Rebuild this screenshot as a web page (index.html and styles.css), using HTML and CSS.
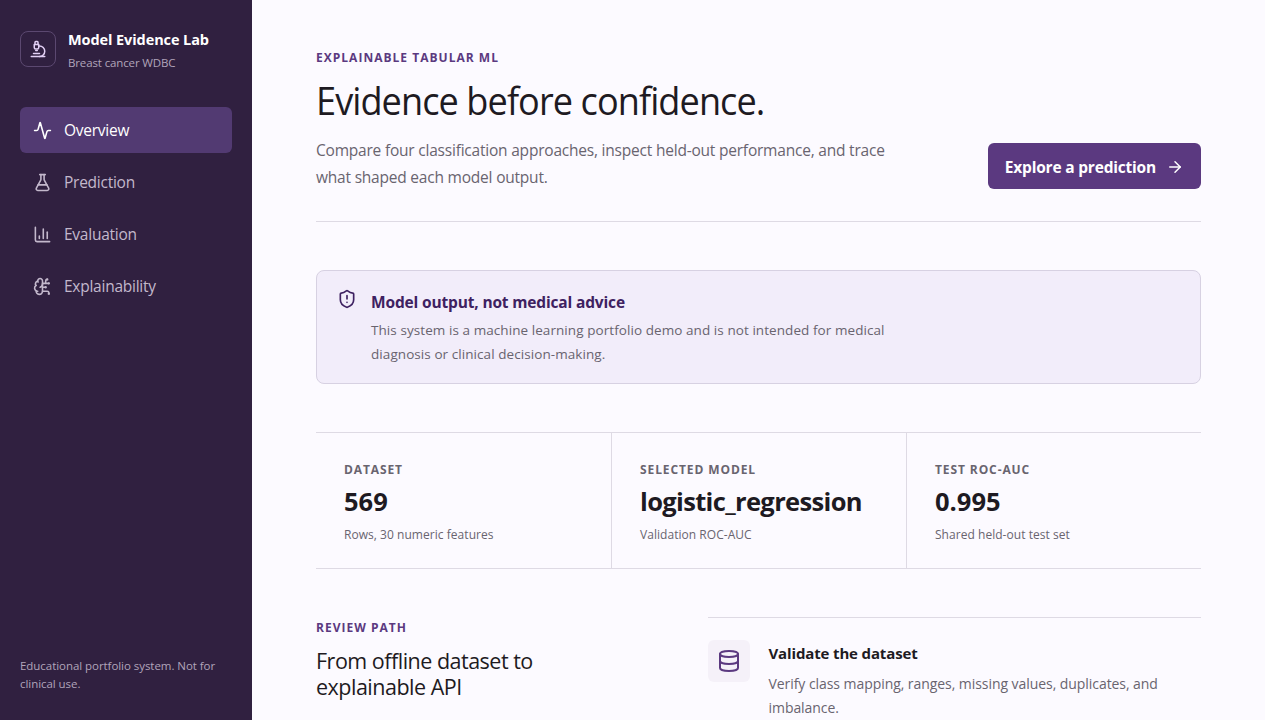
FILE: index.html
```html
<!DOCTYPE html>
<html lang="en">
<head>
    <meta charset="UTF-8">
    <meta name="viewport" content="width=device-width, initial-scale=1.0">
    <title>Model Evidence Lab</title>
    <link rel="stylesheet" href="styles.css">
</head>
<body>
    <div class="app">
        <aside class="sidebar">
            <div class="brand">
                <span class="brand-mark">
                    <svg class="icon" viewBox="0 0 24 24"><path d="M6 18h8"/><path d="M3 22h18"/><path d="M14 22a7 7 0 1 0 0-14h-1"/><path d="M9 14h2"/><path d="M9 12a2 2 0 0 1-2-2V6h6v4a2 2 0 0 1-2 2Z"/><path d="M12 6V3a1 1 0 0 0-1-1H9a1 1 0 0 0-1 1v3"/></svg>
                </span>
                <div class="brand-text">
                    <strong>Model Evidence Lab</strong>
                    <small>Breast cancer WDBC</small>
                </div>
            </div>
            <nav class="nav">
                <a class="nav-link active" href="#">
                    <svg class="icon" viewBox="0 0 24 24"><path d="M22 12h-2.48a2 2 0 0 0-1.93 1.46l-2.35 8.36a.25.25 0 0 1-.48 0L9.24 2.18a.25.25 0 0 0-.48 0l-2.35 8.36A2 2 0 0 1 4.49 12H2"/></svg>
                    <span>Overview</span>
                </a>
                <a class="nav-link" href="#">
                    <svg class="icon" viewBox="0 0 24 24"><path d="M14 2v6a2 2 0 0 0 .245.96l5.51 10.08A2 2 0 0 1 18 22H6a2 2 0 0 1-1.755-2.96l5.51-10.08A2 2 0 0 0 10 8V2"/><path d="M6.453 15h11.094"/><path d="M8.5 2h7"/></svg>
                    <span>Prediction</span>
                </a>
                <a class="nav-link" href="#">
                    <svg class="icon" viewBox="0 0 24 24"><path d="M3 3v16a2 2 0 0 0 2 2h16"/><path d="M18 17V9"/><path d="M13 17V5"/><path d="M8 17v-3"/></svg>
                    <span>Evaluation</span>
                </a>
                <a class="nav-link" href="#">
                    <svg class="icon" viewBox="0 0 24 24"><path d="M12 5a3 3 0 1 0-5.997.125 4 4 0 0 0-2.526 5.77 4 4 0 0 0 .556 6.588A4 4 0 1 0 12 18Z"/><path d="M9 13a4.5 4.5 0 0 0 3-4"/><path d="M6.003 5.125A3 3 0 0 0 6.401 6.5"/><path d="M3.477 10.896a4 4 0 0 1 .585-.396"/><path d="M6 18a4 4 0 0 1-1.967-.516"/><path d="M12 13h4"/><path d="M12 18h6a2 2 0 0 1 2 2v1"/><path d="M12 8h8"/><path d="M16 8V5a2 2 0 0 1 2-2"/><circle cx="16" cy="13" r=".5"/><circle cx="18" cy="3" r=".5"/><circle cx="20" cy="21" r=".5"/><circle cx="20" cy="8" r=".5"/></svg>
                    <span>Explainability</span>
                </a>
            </nav>
            <p class="sidebar-note">Educational portfolio system. Not for clinical use.</p>
        </aside>

        <main class="main">
            <header class="page-header">
                <div class="page-intro">
                    <p class="eyebrow">Explainable tabular ML</p>
                    <h1>Evidence before confidence.</h1>
                    <p class="lead">Compare four classification approaches, inspect held-out performance, and trace<br>what shaped each model output.</p>
                </div>
                <a class="button" href="#">
                    <span>Explore a prediction</span>
                    <svg class="icon" viewBox="0 0 24 24"><path d="M5 12h14"/><path d="m12 5 7 7-7 7"/></svg>
                </a>
            </header>

            <section class="notice">
                <svg class="icon" viewBox="0 0 24 24"><path d="M20 13c0 5-3.5 7.5-7.66 8.95a1 1 0 0 1-.67-.01C7.5 20.5 4 18 4 13V6a1 1 0 0 1 1-1c2 0 4.5-1.2 6.24-2.72a1.17 1.17 0 0 1 1.52 0C14.51 3.81 17 5 19 5a1 1 0 0 1 1 1z"/><path d="M12 8v4"/><path d="M12 16h.01"/></svg>
                <div>
                    <h2>Model output, not medical advice</h2>
                    <p>This system is a machine learning portfolio demo and is not intended for medical<br>diagnosis or clinical decision-making.</p>
                </div>
            </section>

            <section class="metrics">
                <div class="metric">
                    <p class="metric-label">Dataset</p>
                    <p class="metric-value">569</p>
                    <p class="metric-detail">Rows, 30 numeric features</p>
                </div>
                <div class="metric">
                    <p class="metric-label">Selected model</p>
                    <p class="metric-value metric-name">logistic_regression</p>
                    <p class="metric-detail">Validation ROC-AUC</p>
                </div>
                <div class="metric">
                    <p class="metric-label">Test ROC-AUC</p>
                    <p class="metric-value">0.995</p>
                    <p class="metric-detail">Shared held-out test set</p>
                </div>
            </section>

            <section class="review">
                <div class="review-intro">
                    <p class="eyebrow">Review path</p>
                    <h2>From offline dataset to<br>explainable API</h2>
                </div>
                <div class="step">
                    <span class="step-icon">
                        <svg class="icon" viewBox="0 0 24 24"><ellipse cx="12" cy="5" rx="9" ry="3"/><path d="M3 5V19A9 3 0 0 0 21 19V5"/><path d="M3 12A9 3 0 0 0 21 12"/></svg>
                    </span>
                    <div>
                        <h3>Validate the dataset</h3>
                        <p>Verify class mapping, ranges, missing values, duplicates, and<br>imbalance.</p>
                    </div>
                </div>
            </section>
        </main>
    </div>
</body>
</html>
```
FILE: styles.css
```css
:root {
    --sidebar: #302040;
    --accent: #5b3980;
    --ink: #1e1a22;
    --muted: #69646f;
    --line: #dedae4;
    --page: #fcfaff;
}

* {
    box-sizing: border-box;
}

body {
    margin: 0;
    background: var(--page);
    color: var(--ink);
    font-family: "Segoe UI", "Open Sans", "Noto Sans", sans-serif;
    font-size: 15.5px;
    overflow: hidden;
}

h1, h2, h3, p {
    margin: 0;
}

a {
    color: inherit;
    text-decoration: none;
}

.icon {
    width: 20px;
    height: 20px;
    flex: none;
    fill: none;
    stroke: currentColor;
    stroke-width: 2;
    stroke-linecap: round;
    stroke-linejoin: round;
}

.app {
    display: grid;
    grid-template-columns: 252px 1fr;
    height: 100vh;
}

.sidebar {
    display: flex;
    flex-direction: column;
    padding: 28px 20px 27px;
    background: var(--sidebar);
    color: #c3b8cc;
}

.brand {
    display: flex;
    align-items: flex-start;
    gap: 12px;
    margin-bottom: 34px;
}

.brand-mark {
    display: grid;
    place-items: center;
    width: 36px;
    height: 36px;
    margin-top: 3px;
    border: 1px solid #5b4870;
    border-radius: 8px;
    color: #e2d0f5;
}

.brand-mark .icon {
    width: 18px;
    height: 18px;
}

.brand-text strong,
.brand-text small {
    display: block;
}

.brand-text strong {
    color: #fff;
    font-size: 14.5px;
    letter-spacing: -0.09px;
    line-height: 23px;
}

.brand-text small {
    margin-top: 2px;
    color: #b0a4ba;
    font-size: 11.5px;
    letter-spacing: -0.13px;
    line-height: 20px;
}

.nav {
    display: grid;
    gap: 6px;
    letter-spacing: -0.25px;
}

.nav-link {
    display: flex;
    align-items: center;
    gap: 12px;
    height: 46px;
    padding: 0 13px;
    border-radius: 6px;
}

.nav-link .icon {
    width: 19px;
    height: 19px;
}

.nav-link.active {
    background: #523a72;
    color: #fff;
}

.sidebar-note {
    margin-top: auto;
    color: #b0a4ba;
    font-size: 11.5px;
    letter-spacing: -0.05px;
    line-height: 18px;
}

.main {
    padding: 48px 64px 0;
}

.page-header {
    display: flex;
    align-items: flex-end;
    justify-content: space-between;
    padding-bottom: 30px;
    border-bottom: 1px solid var(--line);
}

.eyebrow {
    color: var(--accent);
    font-size: 12px;
    font-weight: 700;
    letter-spacing: 1.02px;
    line-height: 20px;
    text-transform: uppercase;
}

h1 {
    margin: 9px 0 14px;
    font-size: 39px;
    font-weight: 400;
    line-height: 46px;
    letter-spacing: -1px;
    transform: scaleX(0.926);
    transform-origin: left;
}

.lead {
    color: var(--muted);
    letter-spacing: -0.21px;
    line-height: 27px;
}

.button {
    display: flex;
    align-items: center;
    gap: 10px;
    height: 46px;
    margin-bottom: 2px;
    padding: 2px 17px 0;
    border-radius: 6px;
    background: var(--accent);
    color: #fff;
    font-weight: 700;
    letter-spacing: -0.2px;
    white-space: nowrap;
}

.button .icon {
    width: 18px;
    height: 18px;
}

.notice {
    display: flex;
    gap: 14px;
    height: 114px;
    margin: 48px 0;
    padding: 18px 20px;
    border: 1px solid #d7d1e2;
    border-radius: 8px;
    background: #f2edfa;
    color: #3e2161;
}

.notice h2 {
    font-size: 15.5px;
    letter-spacing: -0.16px;
    line-height: 26px;
}

.notice p {
    margin-top: 3px;
    color: var(--muted);
    font-size: 13.5px;
    letter-spacing: 0.07px;
    line-height: 24px;
}

.metrics {
    display: grid;
    grid-template-columns: repeat(3, 1fr);
    border-top: 1px solid var(--line);
    border-bottom: 1px solid var(--line);
}

.metric {
    height: 135px;
    padding: 27px 28px 0;
}

.metric + .metric {
    border-left: 1px solid var(--line);
}

.metric-label {
    color: var(--muted);
    font-size: 12px;
    font-weight: 700;
    letter-spacing: 0.9px;
    line-height: 20px;
    text-transform: uppercase;
}

.metric-value {
    margin-bottom: 2px;
    font-size: 25.5px;
    font-weight: 700;
    line-height: 43px;
}

.metric-name {
    letter-spacing: -0.65px;
}

.metric-detail {
    color: var(--muted);
    font-size: 12px;
    letter-spacing: 0.04px;
    line-height: 20px;
}

.review {
    display: grid;
    grid-template-columns: 344px 1fr;
    gap: 48px;
    margin-top: 48px;
}

.review-intro {
    padding-top: 1px;
}

.review h2 {
    margin-top: 10px;
    font-size: 21.5px;
    font-weight: 400;
    letter-spacing: -0.5px;
    line-height: 26px;
}

.step {
    display: flex;
    gap: 18.5px;
    padding-top: 22px;
    border-top: 1px solid var(--line);
}

.step-icon {
    display: grid;
    place-items: center;
    width: 42px;
    height: 42px;
    border-radius: 6px;
    background: #f5f1f9;
    color: var(--accent);
}

.step-icon .icon {
    width: 24px;
    height: 24px;
}

.step h3 {
    font-size: 15px;
    letter-spacing: -0.14px;
    line-height: 26px;
}

.step p {
    margin-top: 6px;
    color: var(--muted);
    font-size: 14px;
    letter-spacing: -0.06px;
    line-height: 24px;
}
```
